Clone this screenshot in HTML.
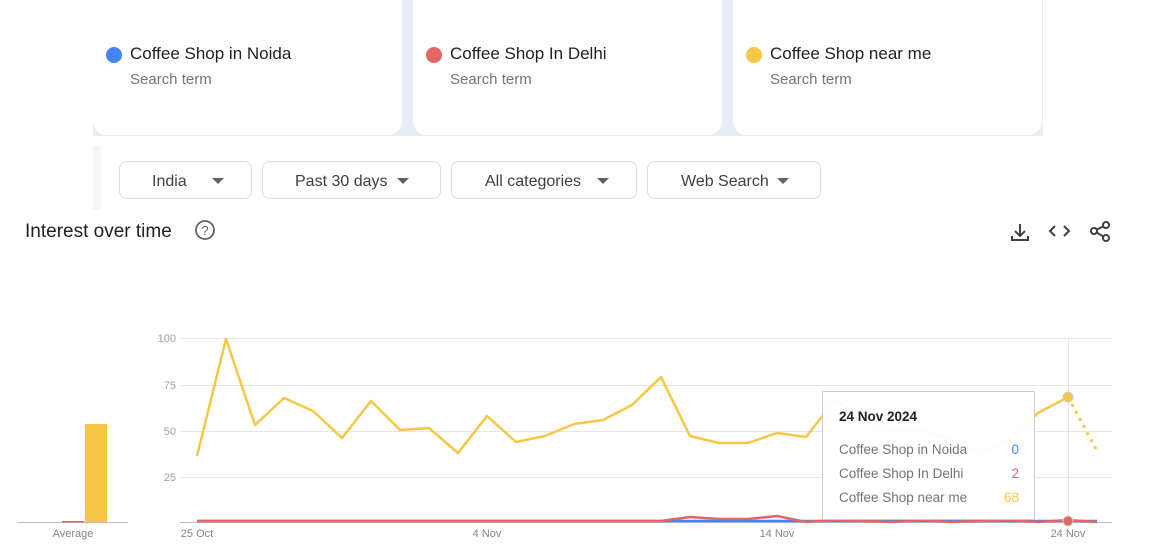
<!DOCTYPE html>
<html><head><meta charset="utf-8"><style>
*{margin:0;padding:0;box-sizing:border-box}
body{width:1150px;height:550px;background:#fff;font-family:"Liberation Sans",sans-serif;position:relative;overflow:hidden;color:#202124}
.strip{position:absolute;left:93px;top:0;width:950px;height:136px;background:#e8edf5}
.card{position:absolute;top:0;width:309px;height:135px;background:#fff;border-radius:0 0 14px 14px}
.dot{position:absolute;left:13px;top:47px;width:16px;height:16px;border-radius:50%}
.t{position:absolute;left:37px;top:44px;font-size:17px;color:#202124}
.s{position:absolute;left:37px;top:71px;font-size:15px;color:#70757a}
.btn{position:absolute;top:161px;height:38px;border:1px solid #dadce0;border-radius:8px;font-size:16px;color:#3c4043;line-height:40px}
.btn span{position:absolute;top:0}
.btn i{position:absolute;top:16px;width:0;height:0;border-left:6px solid transparent;border-right:6px solid transparent;border-top:6px solid #5f6368}
</style></head><body>
<div class="strip"></div>
<div style="position:absolute;left:93px;top:146px;width:8px;height:64px;background:#f3f5f9"></div>
<div class="card" style="left:93px"><div class="dot" style="background:#4285f4"></div><div class="t">Coffee Shop in Noida</div><div class="s">Search term</div></div>
<div class="card" style="left:413px"><div class="dot" style="background:#e06666"></div><div class="t">Coffee Shop In Delhi</div><div class="s">Search term</div></div>
<div class="card" style="left:733px"><div class="dot" style="background:#f6c744"></div><div class="t">Coffee Shop near me</div><div class="s">Search term</div></div>
<div class="btn" style="left:119px;width:133px"><span style="left:32px">India</span><i style="left:92px"></i></div>
<div class="btn" style="left:262px;width:179px"><span style="left:32px">Past 30 days</span><i style="left:134px"></i></div>
<div class="btn" style="left:451px;width:186px"><span style="left:33px">All categories</span><i style="left:145px"></i></div>
<div class="btn" style="left:647px;width:174px"><span style="left:33px">Web Search</span><i style="left:129px"></i></div>
<div style="position:absolute;left:25px;top:221px;font-size:19px;color:#202124">Interest over time</div>
<svg style="position:absolute;left:0;top:0" width="1150" height="550">
<circle cx="205" cy="230" r="9" fill="none" stroke="#5f6368" stroke-width="1.8"/>
<text x="205" y="235" font-size="13" text-anchor="middle" fill="#5f6368" font-family="Liberation Sans">?</text>
<g fill="none" stroke="#3c4043" stroke-width="2">
<path d="M1020 224v12M1015 231l5 5 5-5M1012 236v4h16v-4"/>
<path d="M1055 226l-5 5 5 5M1064 226l5 5-5 5"/>
</g>
<g fill="none" stroke="#3c4043" stroke-width="2"><path d="M1106 225L1094 231L1106 238"/></g>
<circle cx="1106" cy="225" r="3" fill="#fff" stroke="#3c4043" stroke-width="2"/><circle cx="1094" cy="231" r="3" fill="#fff" stroke="#3c4043" stroke-width="2"/><circle cx="1106" cy="238" r="3" fill="#fff" stroke="#3c4043" stroke-width="2"/>
<g stroke="#e6e6e6" stroke-width="1"><path d="M180 338.5H1112M180 385.5H1112M180 431.5H1112M180 477.5H1112M1068.5 338V522"/></g>
<g font-size="11" fill="#9aa0a6" font-family="Liberation Sans" text-anchor="end"><text x="176" y="342">100</text><text x="176" y="389">75</text><text x="176" y="435">50</text><text x="176" y="481">25</text></g>
<path d="M18 522.5H128M180 522.5H1112" stroke="#bdbdbd"/>
<rect x="85" y="424" width="22" height="98" fill="#f6c744"/><rect x="62" y="521" width="22" height="1.5" fill="#e06666"/>
<g font-size="11" fill="#80868b" font-family="Liberation Sans" text-anchor="middle"><text x="73" y="537">Average</text><text x="197" y="537">25 Oct</text><text x="487" y="537">4 Nov</text><text x="777" y="537">14 Nov</text><text x="1068" y="537">24 Nov</text></g>
<path d="M197 521H1097" stroke="#4285f4" stroke-width="2.5" fill="none"/>
<path d="M197 521H661L690 517L719 519L748 519L777 516L806 522L835 520L864 521L893 522L922 520L951 522L980 521L1009 520L1038 522L1068 520L1097 522" stroke="#e06666" stroke-width="2.5" fill="none"/>
<path d="M197 456L226 339L255 425L284 398L313 411L342 438L371 401L400 430L429 428L458 453L487 416L516 442L545 436L574 424L603 420L632 405L661 377L690 436L719 443L748 443L777 433L806 437L835 400L864 420L893 430L922 430L951 440L980 453L1009 440L1038 413L1068 397" stroke="#f6c744" stroke-width="2.5" fill="none" stroke-linejoin="round"/>
<path d="M1068 397L1097 451" stroke="#f6c744" stroke-width="3" stroke-dasharray="3 5" fill="none"/>
<circle cx="1068" cy="397" r="5" fill="#f6c744" stroke="#ccc"/>
<circle cx="1068" cy="521" r="5" fill="#e06666" stroke="#ccc"/>
<rect x="822.5" y="391.5" width="212" height="128" fill="#fff" fill-opacity="0.95" stroke="#ccc"/>
<g font-family="Liberation Sans" font-size="13.5"><text x="839" y="421" font-weight="bold" fill="#202124">24 Nov 2024</text>
<text x="839" y="454" fill="#70757a">Coffee Shop in Noida</text><text x="1019" y="454" text-anchor="end" fill="#4285f4">0</text>
<text x="839" y="478" fill="#70757a">Coffee Shop In Delhi</text><text x="1019" y="478" text-anchor="end" fill="#e06666">2</text>
<text x="839" y="502" fill="#70757a">Coffee Shop near me</text><text x="1019" y="502" text-anchor="end" fill="#f6c744">68</text></g>
</svg>
</body></html>
